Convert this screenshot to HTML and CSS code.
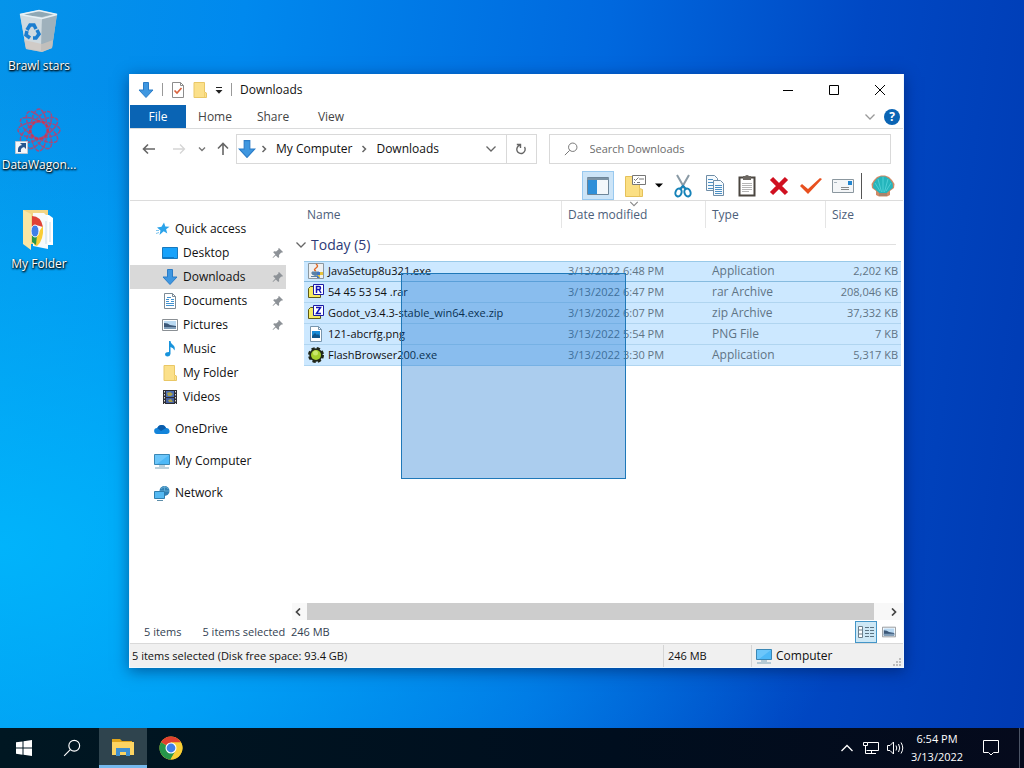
FILE: index.html
```html
<!DOCTYPE html>
<html lang="en">
<head>
  <meta charset="utf-8">
  <title>Downloads</title>
  <link rel="stylesheet" href="styles.css">
</head>
<body>
  <!-- shared icons -->
  <svg class="sprite" aria-hidden="true">
    <symbol id="i-down" viewBox="0 0 16 16"><path d="M5.500.5h5V8h4.500L8 15.500 1 8h4.500z" fill="#3f97e0" stroke="#2b7cc7"/></symbol>
    <symbol id="i-folder" viewBox="0 0 16 16"><path d="M2 .5h10.500V10l2 1v4.500H2z" fill="#fbe08a" stroke="#e9c766"/><path d="M12.500 10.500v4.500" stroke="#f2cf6c"/></symbol>
    <symbol id="i-picture" viewBox="0 0 16 16"><path d="M.5 2.500h15v11H.5z" fill="#fff" stroke="#8a8f94"/><path d="M2 4h12v8H2z" fill="#b9d9f2"/><path d="M2 6q4 0 6 2l6 1v3H2z" fill="#3c5878"/><path d="M2 10h12v2H2z" fill="#7f9db8"/></symbol>
    <symbol id="i-monitor" viewBox="0 0 16 16"><path d="M.5 1.500h15v10H.5z" fill="#4db8f7" stroke="#3a87b5"/><path d="M1 2h14L3 11H1z" fill="#6cc6fa"/><path d="M5 13h6M1 15h14" stroke="#7ba3b8"/></symbol>
    <symbol id="i-pin" viewBox="0 0 12 12"><path d="M7 1l4 4-1 .8-.8-.2L7 8l.2 2-.9.9-2.500-2.500L1 11l-.4-.4 2.800-3L1.200 5.200l.9-.9 2 .2L6.500 2.500 6.200 1.800z" fill="#8d9297"/></symbol>
    <symbol id="i-chev-right" viewBox="0 0 8 8"><path d="M2.500 1l3 3-3 3" fill="none" stroke="#666" stroke-width="1.500"/></symbol>
    <symbol id="i-chev-down" viewBox="0 0 12 12"><path d="M1.500 3.500L6 8l4.500-4.500" fill="none" stroke="currentColor" stroke-width="1.300"/></symbol>
    <symbol id="i-chrome" viewBox="0 0 24 24"><circle cx="12" cy="12" r="11.500" fill="#f7c928"/><path d="M12 12L2 6.200A11.500 11.500 0 0 1 22 6.500H12z" fill="#e0402f"/><path d="M2 6.200A11.500 11.500 0 0 0 11.500 23.500L16.500 15z" fill="#27964a"/><path d="M12 6.500h10A11.500 11.500 0 0 1 11.500 23.500L16.800 14.500z" fill="#f9cf36"/><circle cx="12" cy="12" r="5.500" fill="#fff"/><circle cx="12" cy="12" r="4.400" fill="#3f7fe8"/></symbol>
    <symbol id="i-magnifier" viewBox="0 0 16 16"><g fill="none" stroke="currentColor"><circle cx="10" cy="6" r="4.800"/><path d="M6.500 9.500L1 15"/></g></symbol>
  </svg>

  <main class="desktop">
    <div class="shortcuts">
      <a href="#" class="shortcut">
        <svg width="48" height="50" viewBox="0 0 48 50">
          <path d="M5 6l19-4 18 4-5 34-10 4-16-3z" fill="#b9c8d1"/>
          <path d="M5 7l22 3-1 33-15-3z" fill="#cfdae0"/>
          <path d="M27 10l15-4-5 34-11 3z" fill="#9fb1bc"/>
          <path d="M8 7l16-4 15 3-12 3z" fill="#8fa8b5"/>
          <path d="M5 6.500l19-4 18 4-15 4z" fill="none" stroke="#e6f0f5" stroke-width="1.500"/>
          <path d="M9 32l2 9 16 3 10-4 1-8-11 4z" fill="#d0c4bc" opacity=".7"/>
          <path d="M12 22l3-5h4l2 4M22 22l2 4-3 4h-3M15 30l-4-3 1-4" fill="none" stroke="#1c7ed0" stroke-width="3.500"/>
        </svg>
        <span>Brawl stars</span>
      </a>
      <a href="#" class="shortcut">
        <svg width="48" height="50" viewBox="0 0 48 50">
          <g fill="none" stroke="#a04c80" stroke-width="1.500" stroke-dasharray="4 1">
            <ellipse cx="24" cy="23" rx="21" ry="8"/>
            <ellipse cx="24" cy="23" rx="21" ry="8" transform="rotate(30 24 23)"/>
            <ellipse cx="24" cy="23" rx="21" ry="8" transform="rotate(60 24 23)"/>
            <ellipse cx="24" cy="23" rx="21" ry="8" transform="rotate(90 24 23)"/>
            <ellipse cx="24" cy="23" rx="21" ry="8" transform="rotate(120 24 23)"/>
            <ellipse cx="24" cy="23" rx="21" ry="8" transform="rotate(150 24 23)"/>
          </g>
          <circle cx="24" cy="23" r="9" fill="none" stroke="#c23a58" stroke-width="2" stroke-dasharray="3 2"/>
          <path d="M.500 34.500h12v12H.500z" fill="#f4f7fa" stroke="#b9c6d2"/>
          <path d="M3 45q-1-6 4-7l-2-2h6v6l-2-2q-4 1-3 5z" fill="#28568f"/>
        </svg>
        <span>DataWagon...</span>
      </a>
      <a href="#" class="shortcut">
        <svg width="48" height="50" viewBox="0 0 48 50">
          <path d="M8 4h25v34H8z" fill="#f3d584"/>
          <path d="M22 9h12l4 3v27H22z" fill="#fff"/>
          <path d="M18 7h11l4 4v32l-15-3z" fill="#f8fafb"/>
          <path d="M17 10q9 0 11 11l-7-2-4 5z" fill="#df4236"/>
          <path d="M28 20q1 14-6 20l-3-1 4-12z" fill="#f9cd36"/>
          <path d="M17 25l5 4-1 10-4-3z" fill="#27964a"/>
          <ellipse cx="20" cy="25" rx="4" ry="6" fill="#3f7fe8" stroke="#fff"/>
          <path d="M31 15v23M35 16v20" stroke="#c8dce8"/>
          <path d="M8 4l8 4v36l-8-6z" fill="#fbe6a4"/>
        </svg>
        <span>My Folder</span>
      </a>
    </div>

    <section class="window">
      <header class="titlebar">
        <svg width="16" height="16"><use href="#i-down"/></svg>
        <i class="bar"></i>
        <button type="button" aria-label="Properties"><svg width="14" height="16" viewBox="0 0 14 16"><path d="M1.500.5h8l3 3v12h-11z" fill="#fff" stroke="#8c8c8c"/><path d="M9.500.5v3h3" fill="none" stroke="#8c8c8c"/><path d="M3.500 8.500L6 11l4.500-5" fill="none" stroke="#d9633e" stroke-width="1.700"/></svg></button>
        <button type="button" aria-label="New folder"><svg width="14" height="16" viewBox="1 0 14 16"><use href="#i-folder" width="16" height="16"/></svg></button>
        <button type="button" aria-label="Customize"><svg width="8" height="8" viewBox="0 0 8 8"><path d="M1 1.500h6" stroke="#222"/><path d="M.5 4h7L4 7.800z" fill="#222"/></svg></button>
        <i class="bar"></i>
        <h1>Downloads</h1>
        <div class="controls">
          <button type="button" aria-label="Minimize"><svg width="12" height="12" viewBox="0 0 12 12"><path d="M1 6.500h10" stroke="#000"/></svg></button>
          <button type="button" aria-label="Maximize"><svg width="12" height="12" viewBox="0 0 12 12"><path d="M1.500 1.500h9v9h-9z" fill="none" stroke="#000"/></svg></button>
          <button type="button" aria-label="Close"><svg width="12" height="12" viewBox="0 0 12 12"><path d="M1 1l10 10M11 1L1 11" stroke="#000"/></svg></button>
        </div>
      </header>

      <div class="tabs">
        <button type="button" class="active">File</button>
        <button type="button">Home</button>
        <button type="button">Share</button>
        <button type="button">View</button>
        <div class="tabs-right">
          <button type="button" aria-label="Expand the ribbon"><svg width="12" height="12"><use href="#i-chev-down"/></svg></button>
          <button type="button" class="help">?</button>
        </div>
      </div>

      <div class="address-row">
        <button type="button" class="nav-btn" aria-label="Back"><svg width="14" height="14" viewBox="0 0 14 14"><path d="M13 7H1.500M6 2.500L1.500 7 6 11.500" fill="none" stroke="#666" stroke-width="1.600"/></svg></button>
        <button type="button" class="nav-btn" aria-label="Forward"><svg width="14" height="14" viewBox="0 0 14 14"><path d="M1 7h11.500M8 2.500L12.500 7 8 11.500" fill="none" stroke="#d5d5d5" stroke-width="1.300"/></svg></button>
        <button type="button" class="nav-btn small" aria-label="Recent"><svg width="8" height="8" viewBox="0 0 8 8"><path d="M1 2.500l3 3 3-3" fill="none" stroke="#777" stroke-width="1.400"/></svg></button>
        <button type="button" class="nav-btn up" aria-label="Up"><svg width="14" height="14" viewBox="0 0 14 14"><path d="M7 13V1.500M2 6.500l5-5 5 5" fill="none" stroke="#666" stroke-width="1.600"/></svg></button>
        <div class="address">
          <svg width="18" height="18"><use href="#i-down"/></svg>
          <svg width="8" height="8"><use href="#i-chev-right"/></svg>
          <a href="#">My Computer</a>
          <svg width="8" height="8"><use href="#i-chev-right"/></svg>
          <a href="#">Downloads</a>
          <button type="button" class="drop" aria-label="Previous locations"><svg width="12" height="12"><use href="#i-chev-down"/></svg></button>
          <button type="button" class="refresh" aria-label="Refresh"><svg width="12" height="12" viewBox="0 0 12 12"><path d="M9.500 4A4.200 4.200 0 1 1 5 2.200M1.800 1.500h3.700v3.600" fill="none" stroke="#666" stroke-width="1.400"/></svg></button>
        </div>
        <label class="search">
          <svg width="14" height="14"><use href="#i-magnifier"/></svg>
          <input type="text" placeholder="Search Downloads" aria-label="Search Downloads">
        </label>
      </div>

      <div class="toolbar">
        <button type="button" class="pressed" aria-label="Navigation pane"><svg width="24" height="18" viewBox="0 0 24 18"><path d="M1.500.5h21v17h-21z" fill="#f3f7fa" stroke="#6d8598"/><path d="M1 1h22v2H1z" fill="#7b92a4"/><path d="M2 3h9v14H2z" fill="#2f8fd8"/></svg></button>
        <button type="button" class="split" aria-label="Folder options"><svg width="24" height="24" viewBox="0 0 24 24"><path d="M1.500 2.500h14v12l3 1v7h-17z" fill="#fbdf83" stroke="#e5c15a"/><path d="M8.500 1.500h13v9h-13z" fill="#fff" stroke="#777"/><path d="M10 5l1.500 1.500 3-3M15 5h5M10 8.500h1M13 8.500h3" fill="none" stroke="#777"/><path d="M15.500 14v8" stroke="#e9c766"/></svg><svg width="8" height="5" viewBox="0 0 8 5"><path d="M0 .5h8L4 4.500z"/></svg></button>
        <button type="button" aria-label="Cut"><svg width="18" height="24" viewBox="0 0 18 24"><path d="M3 1l8 14M15 1L7 15" stroke="#8a9aa5" stroke-width="2"/><g fill="none" stroke="#1582b8" stroke-width="2"><ellipse cx="4.500" cy="18.500" rx="3" ry="4" transform="rotate(20 4.500 18.500)"/><ellipse cx="13.500" cy="18.500" rx="3" ry="4" transform="rotate(-20 13.500 18.500)"/><path d="M6 15l3-3 3 3"/></g></svg></button>
        <button type="button" aria-label="Copy"><svg width="20" height="22" viewBox="0 0 20 22"><g fill="#f6fafd" stroke="#6f8da6"><path d="M1.500.5h8l3 3v12h-11z"/><path d="M8.500 5.500h7l3 3v12h-10z"/></g><path d="M3 4.500h5M3 7.500h5M3 10.500h5M3 13.500h5M10 10.500h7M10 12.500h7M10 14.500h7M10 16.500h7M10 18.500h7" stroke="#4b8fc4"/></svg></button>
        <button type="button" aria-label="Paste"><svg width="18" height="22" viewBox="0 0 18 22"><path d="M1.500 2.500h15v18h-15z" fill="#fff" stroke="#4b4640" stroke-width="2"/><path d="M5 1h2q2-2 4 0h2v4H5z" fill="#6c6862"/><path d="M4 8.500h10M4 10.500h10M4 12.500h10M4 14.500h10M4 16.500h7" stroke="#b5b5b5"/></svg></button>
        <button type="button" aria-label="Delete"><svg width="20" height="20" viewBox="0 0 20 20"><path d="M2.500 2.500l15 15M17.500 2.500l-15 15" stroke="#d01020" stroke-width="4.500"/></svg></button>
        <button type="button" aria-label="Rename"><svg width="24" height="20" viewBox="0 0 24 20"><path d="M1 10l2-2 6 5L21 2l2 1L9 18z" fill="#e8501f"/></svg></button>
        <button type="button" aria-label="Properties"><svg width="22" height="14" viewBox="0 0 22 14"><path d="M.5.5h21v13H.5z" fill="#f4f6f8" stroke="#8b979f"/><path d="M9 8.500h8M9 10.500h8" stroke="#888"/><path d="M16 2h4v4h-4z" fill="#2386cf"/><path d="M2 3.500h3" stroke="#a8b4bd"/></svg></button>
        <i class="divider"></i>
        <button type="button" aria-label="Shell"><svg width="24" height="22" viewBox="0 0 24 22"><path d="M5 16L1 13 .5 9 3 5l3-3 4-1.500h4L18 2l3 3 2.500 4-.5 4-4 3v4l-3 1.500H8L5 20z" fill="#cf8a66"/><path d="M6 16L2 12.500 2.500 8l3-4 4-2.500h5l4 2.500 3 4 .5 4.500L18 16l-3 2.500H9z" fill="#25b5bc"/><path d="M12 17V2M10.500 17L7 4M13.500 17L17 4M9 16L4 8M15 16l5-8" stroke="#4fcfd5" fill="none"/><path d="M8 18h8v3H8z" fill="#a9836c"/></svg></button>
      </div>

      <div class="content">
        <nav class="tree">
          <a href="#"><svg width="14" height="14" viewBox="0 0 14 14"><path d="M8 .500l1.300 4 4.200.2-3.400 2.600 1.200 4.200-3.600-2.300L3.500 13l1-4.600L1 5.500l4.500-.8z" fill="#2ba3ea"/><path d="M0 8.500h3M0 11.500l3-1" stroke="#7cc4ee"/></svg>Quick access</a>
          <a href="#" class="sub"><svg width="16" height="16" viewBox="0 0 16 16"><path d="M.5 2.500h15v11H.5z" fill="#17a2fb" stroke="#1879bd"/><path d="M1 12.500h11" stroke="#0b78c8"/></svg>Desktop<svg class="pin" width="12" height="12"><use href="#i-pin"/></svg></a>
          <a href="#" class="sub current"><svg width="16" height="16"><use href="#i-down"/></svg>Downloads<svg class="pin" width="12" height="12"><use href="#i-pin"/></svg></a>
          <a href="#" class="sub"><svg width="16" height="16" viewBox="0 0 16 16"><path d="M2.500.5h8l3 3v12h-11z" fill="#fff" stroke="#7d8b96"/><path d="M10.500.5v3h3" fill="none" stroke="#7d8b96"/><path d="M4 6.500h3M4 8.500h3M9 6.500h3M9 8.500h3M4 10.500h8M4 12.500h8M5 4.500h4" stroke="#4192d0"/></svg>Documents<svg class="pin" width="12" height="12"><use href="#i-pin"/></svg></a>
          <a href="#" class="sub"><svg width="16" height="16"><use href="#i-picture"/></svg>Pictures<svg class="pin" width="12" height="12"><use href="#i-pin"/></svg></a>
          <a href="#" class="sub"><svg width="16" height="16" viewBox="0 0 16 16"><path d="M7 0h1.500q0 2.500 2.500 4t1.500 5.500q-1-3-4-3.500v7q-.5 2.500-3 2.500T3 13.300Q3.300 11 7 11z" fill="#1793dc"/></svg>Music</a>
          <a href="#" class="sub"><svg width="16" height="16"><use href="#i-folder"/></svg>My Folder</a>
          <a href="#" class="sub"><svg width="16" height="16" viewBox="0 0 16 16"><path d="M1 1h14v14H1z" fill="#2d2d33"/><path d="M4 2h8v6H4z" fill="#4c6fb5"/><path d="M4 9h8v5H4z" fill="#4560a0"/><path d="M5 4l3-1 3 2-2 2H6zM6 11l3-1 2 3H7z" fill="#a9a14b"/><path d="M2.500 2v13M13.500 2v13" stroke="#ddd" stroke-dasharray="1.500 1.500"/></svg>Videos</a>
          <a href="#" class="root"><svg width="16" height="16" viewBox="0 0 16 16"><path d="M3 13a3 3 0 0 1 .3-6A4.700 4.700 0 0 1 12 7a3 3 0 0 1 1 6z" fill="#1384da"/><path d="M3.300 7A4.700 4.700 0 0 1 12 7L7 10z" fill="#0b5cab"/></svg>OneDrive</a>
          <a href="#" class="root"><svg width="16" height="16"><use href="#i-monitor"/></svg>My Computer</a>
          <a href="#" class="root"><svg width="16" height="16" viewBox="0 0 16 16"><circle cx="10.500" cy="6" r="5" fill="#2f80b5"/><path d="M7 4q4-4 7 0M10.500 1v9M6 6h9" stroke="#5fa8d0" fill="none"/><path d="M.5 6.500h10v7H.5z" fill="#55b9f2" stroke="#2f7eae"/><path d="M3 15.500h6" stroke="#5d8eaa"/></svg>Network</a>
        </nav>

        <div class="files">
          <table>
            <colgroup><col class="col-name"><col class="col-date"><col class="col-type"><col></colgroup>
            <thead>
              <tr>
                <th>Name</th>
                <th class="sorted"><svg width="10" height="10"><use href="#i-chev-down"/></svg>Date modified</th>
                <th>Type</th>
                <th>Size</th>
              </tr>
            </thead>
            <tbody>
              <tr class="group">
                <td colspan="4"><div><svg width="12" height="12"><use href="#i-chev-down"/></svg>Today (5)<hr></div></td>
              </tr>
              <tr class="selected focused">
                <td><div><svg width="16" height="16" viewBox="0 0 16 16"><path d="M.5.5h15v15H.5z" fill="#edf0f2" stroke="#8b979f"/><path d="M8 1q3 2 0 4t0 3" stroke="#e06a27" stroke-width="1.500" fill="none"/><path d="M4 9h7v2q-3.500 3-7 0zM3 13.500h8" fill="#5a82a6" stroke="#5a82a6"/><path d="M9 9h3v6H9z" fill="#3f74c4"/><path d="M12 9h3v3h-3zM9 12h3v3" fill="#e8c43a"/></svg>JavaSetup8u321.exe</div></td>
                <td>3/13/2022 6:48 PM</td><td class="type">Application</td><td>2,202 KB</td>
              </tr>
              <tr class="selected">
                <td><div><svg width="16" height="16" viewBox="0 0 16 16"><path d="M.5 4.500l2-2h4v2h6v9h-12z" fill="#f5ec62" stroke="#5d5916"/><path d="M5.500.5h10v10h-10z" fill="#fff" stroke="#1b1ba5"/><path d="M8.500 9V2.500h2.500q1.500 0 1.500 1.500T11 5.500H8.500M11 5.500L13 9" fill="none" stroke="#1414b4" stroke-width="1.500"/></svg>54 45 53 54 .rar</div></td>
                <td>3/13/2022 6:47 PM</td><td class="type">rar Archive</td><td>208,046 KB</td>
              </tr>
              <tr class="selected">
                <td><div><svg width="16" height="16" viewBox="0 0 16 16"><path d="M.5 4.500l2-2h4v2h6v9h-12z" fill="#f5ec62" stroke="#5d5916"/><path d="M5.500.5h10v10h-10z" fill="#fff" stroke="#1b1ba5"/><path d="M8 2.500h4.500L8.500 8.500H13" fill="none" stroke="#1414b4" stroke-width="1.500"/></svg>Godot_v3.4.3-stable_win64.exe.zip</div></td>
                <td>3/13/2022 6:07 PM</td><td class="type">zip Archive</td><td>37,332 KB</td>
              </tr>
              <tr class="selected">
                <td><div><svg width="16" height="16" viewBox="0 0 16 16"><path d="M2.500.5h8l3 3v12h-11z" fill="#fff" stroke="#7896ae"/><path d="M10.500.5v3h3" fill="none" stroke="#7896ae"/><path d="M4 5h8v7H4z" fill="#178ad6"/><path d="M4 10l3-3 2 2 1-1 2 2v2H4z" fill="#0c558c"/></svg>121-abcrfg.png</div></td>
                <td>3/13/2022 5:54 PM</td><td class="type">PNG File</td><td>7 KB</td>
              </tr>
              <tr class="selected">
                <td><div><svg width="16" height="16" viewBox="0 0 16 16"><circle cx="8" cy="8" r="6.500" fill="#2c3522" stroke="#20261a" stroke-width="3" stroke-dasharray="3.100 2"/><circle cx="8" cy="8" r="6.500" fill="#20261a"/><circle cx="8" cy="8" r="5" fill="#a5cf2e"/><circle cx="7.500" cy="6" r="2.500" fill="#cbe76c"/></svg>FlashBrowser200.exe</div></td>
                <td>3/13/2022 3:30 PM</td><td class="type">Application</td><td>5,317 KB</td>
              </tr>
            </tbody>
          </table>
          <div class="marquee"></div>
          <div class="scrollbar">
            <button type="button" aria-label="Scroll left"><svg width="8" height="8" viewBox="0 0 8 8"><path d="M6 .5L2.500 4 6 7.500" fill="none" stroke="#444" stroke-width="1.700"/></svg></button>
            <div class="thumb"></div>
            <button type="button" class="right" aria-label="Scroll right"><svg width="8" height="8" viewBox="0 0 8 8"><path d="M2 .5L5.500 4 2 7.500" fill="none" stroke="#444" stroke-width="1.700"/></svg></button>
          </div>
        </div>
      </div>

      <div class="details">
        <span>5 items</span>
        <span>5 items selected&nbsp; 246 MB</span>
        <div class="views">
          <button type="button" class="on" aria-label="Details view"><svg width="18" height="14" viewBox="0 0 18 14"><path d="M1.500 1.500h4v11h-4zM1.500 5h4M1.500 9h4" fill="#fff" stroke="#6b7f8c"/><path d="M8 2.500h4M13 2.500h4M8 5.500h4M13 5.500h4M8 8.500h4M13 8.500h4M8 11.500h4M13 11.500h4" stroke="#5c7382"/></svg></button>
          <button type="button" aria-label="Large icons"><svg width="14" height="14"><use href="#i-picture"/></svg></button>
        </div>
      </div>

      <footer class="statusbar">
        <span class="free">5 items selected (Disk free space: 93.4 GB)</span>
        <span class="size">246 MB</span>
        <span class="zone"><svg width="16" height="16"><use href="#i-monitor"/></svg>Computer</span>
        <svg class="grip" width="10" height="10" viewBox="0 0 10 10"><path d="M7 1h2v2H7zM4 4h2v2H4zM7 4h2v2H7zM1 7h2v2H1zM4 7h2v2H4zM7 7h2v2H7z" fill="#bdbdbd"/></svg>
      </footer>
    </section>
  </main>

  <footer class="taskbar">
    <button type="button" aria-label="Start"><svg width="16" height="16" viewBox="0 0 16 16"><path d="M0 2.300L6.500 1.400v6.200H0zM7.500 1.200L16 0v7.600H7.500zM0 8.500h6.500v6.200L0 13.800zM7.500 8.500H16V16l-8.500-1.200z" fill="#fff"/></svg></button>
    <button type="button" class="find" aria-label="Search"><svg width="18" height="18"><use href="#i-magnifier"/></svg></button>
    <button type="button" class="running" aria-label="File Explorer"><svg width="24" height="20" viewBox="0 0 24 20"><path d="M1 2h8l2 2h10v4H1z" fill="#e0a51b"/><path d="M1 5h22v13H1z" fill="#fcd462"/><path d="M5 11h14v8h-4v-4H9v4H5z" fill="#3f8fd0"/></svg></button>
    <button type="button" aria-label="Chrome"><svg width="24" height="24"><use href="#i-chrome"/></svg></button>
    <div class="tray">
      <button type="button" aria-label="Hidden icons"><svg width="14" height="10" viewBox="0 0 14 10"><path d="M1.500 8L7 2.500 12.500 8" fill="none" stroke="#fff" stroke-width="1.300"/></svg></button>
      <button type="button" aria-label="Network"><svg width="18" height="16" viewBox="0 0 18 16"><path d="M5.500 2.500h11v8h-12M9.500 10.500v3M6 13.500h8M1.500 2.500h4v3h-4zM3.500 5.500v8h3" fill="none" stroke="#fff"/></svg></button>
      <button type="button" aria-label="Volume"><svg width="18" height="16" viewBox="0 0 18 16"><path d="M1.500 5.500H4L7.500 2v12L4 10.500H1.500zM10 5.500q1.500 2.500 0 5M12.500 4q2.500 4 0 8M15 2.500q3.500 5.500 0 11" fill="none" stroke="#fff"/></svg></button>
      <div class="clock"><span>6:54 PM</span><span>3/13/2022</span></div>
      <button type="button" class="action" aria-label="Notifications"><svg width="18" height="18" viewBox="0 0 18 18"><path d="M1.500 1.500h15v12h-5L9 16l-2.500-2.500h-5z" fill="none" stroke="#fff"/></svg></button>
    </div>
  </footer>
</body>
</html>
```

FILE: styles.css
```css
* {
  box-sizing: border-box;
}

body {
  margin: 0;
  height: 100vh;
  display: flex;
  flex-direction: column;
  overflow: hidden;
  font-family: "Open Sans", "Noto Sans", sans-serif;
  font-size: 12px;
  line-height: 16px;
  color: #111;
}

a {
  color: inherit;
  text-decoration: none;
}

button {
  display: flex;
  align-items: center;
  justify-content: center;
  padding: 0;
  border: none;
  background: none;
  font: inherit;
  color: inherit;
}

svg {
  display: block;
  flex: none;
}

.sprite {
  position: absolute;
  width: 0;
  height: 0;
}

/* desktop */
.desktop {
  flex: 1;
  position: relative;
  background:
    radial-gradient(ellipse at 0% 75%, rgba(0, 188, 255, 0.8), rgba(0, 170, 255, 0) 60%),
    linear-gradient(97deg, #0594ea 0%, #0089ee 22%, #0068de 55%, #0048c4 78%, #003ab2 100%);
}

.shortcuts {
  width: 78px;
  padding-top: 8px;
}

.shortcut {
  display: flex;
  flex-direction: column;
  align-items: center;
  height: 99px;
  color: #fff;
  white-space: nowrap;
  text-shadow: 1px 1px 2px #000, 0 1px 2px #000;
}

/* explorer window */
.window {
  position: absolute;
  top: 74px;
  right: 120px;
  bottom: 60px;
  left: 129px;
  display: flex;
  flex-direction: column;
  background: #fff;
  border: 1px solid #eef8ff;
  border-top: none;
  box-shadow: 0 3px 14px rgba(0, 20, 70, 0.5);
}

.titlebar {
  display: flex;
  align-items: center;
  height: 31px;
  padding-left: 8px;
  gap: 8px;
}

.titlebar h1 {
  margin: 0;
  font-size: 12px;
  font-weight: normal;
}

.bar {
  width: 1px;
  height: 13px;
  background: #999;
}

.controls {
  display: flex;
  align-self: stretch;
  margin-left: auto;
}

.controls button {
  width: 46px;
}

.tabs {
  display: flex;
  height: 24px;
  border-bottom: 1px solid #dadbdc;
  color: #444;
}

.tabs > button {
  width: 58px;
}

.tabs > .active {
  width: 56px;
  background: #0a64b4;
  color: #fff;
}

.tabs-right {
  display: flex;
  align-items: center;
  gap: 8px;
  margin-left: auto;
  padding-right: 3px;
  color: #999;
}

.help {
  width: 16px;
  height: 16px;
  border-radius: 50%;
  background: #0a64b4;
  color: #fff;
  font-weight: bold;
}

.address-row {
  display: flex;
  align-items: center;
  height: 42px;
  padding: 0 12px 2px 4px;
  color: #666;
}

.nav-btn {
  width: 30px;
}

.nav-btn.small {
  width: 16px;
}

.nav-btn.up {
  width: 26px;
}

.address,
.search {
  display: flex;
  align-items: center;
  height: 30px;
  border: 1px solid #d9d9d9;
}

.address {
  flex: 1 1 300px;
  padding-left: 1px;
  gap: 4px;
}

.address a {
  margin: 0 4px;
  color: #111;
}

.address .drop {
  width: 30px;
  margin-left: auto;
}

.address .refresh {
  align-self: stretch;
  width: 30px;
  margin-left: -4px;
  border-left: 1px solid #d9d9d9;
}

.search {
  flex: 1 1 342px;
  margin-left: 12px;
  padding-left: 14px;
  gap: 12px;
}

.search input {
  flex: 1;
  min-width: 0;
  padding: 0;
  border: none;
  outline: none;
  font: inherit;
  font-size: 11px;
}

.search input::placeholder {
  color: #6d6d6d;
}

.toolbar {
  display: flex;
  align-items: center;
  justify-content: flex-end;
  height: 30px;
  padding-right: 4px;
  border-bottom: 1px solid #dcdcdc;
}

.toolbar button {
  width: 32px;
  height: 29px;
}

.toolbar .pressed {
  background: #cce4f7;
  border: 1px solid #99c9ef;
}

.toolbar .split {
  width: 53px;
  padding-left: 6px;
  gap: 7px;
}

.divider {
  width: 1px;
  height: 26px;
  margin: 0 5px 0 2px;
  background: #555;
}

.content {
  flex: 1;
  display: flex;
  min-height: 0;
}

/* navigation tree */
.tree {
  width: 162px;
  padding: 16px 6px 0 0;
}

.tree a {
  display: flex;
  align-items: center;
  gap: 5px;
  height: 24px;
  padding-left: 26px;
}

.tree .sub {
  padding-left: 32px;
}

.tree .root {
  margin-top: 8px;
  padding-left: 24px;
}

.tree .current {
  background: #d9d9d9;
}

.tree .pin {
  margin: 0 2px 0 auto;
}

/* file list */
.files {
  flex: 1;
  position: relative;
  display: flex;
  flex-direction: column;
  padding-left: 12px;
}

table {
  width: calc(100% - 2px);
  table-layout: fixed;
  border-spacing: 0;
}

.col-name {
  width: 257px;
}

.col-date {
  width: 144px;
}

.col-type {
  width: 120px;
}

th {
  height: 27px;
  padding: 0 6px;
  border-left: 1px solid #e5e5e5;
  font-weight: normal;
  text-align: left;
  color: #4c607a;
}

th:first-child {
  padding-left: 3px;
  border-left: none;
}

.sorted {
  position: relative;
}

.sorted svg {
  position: absolute;
  top: -2px;
  left: 50%;
  margin-left: -5px;
  color: #888;
}

.group td {
  height: 33px;
  padding: 0;
}

.group div {
  display: flex;
  align-items: center;
  gap: 4px;
  margin-left: -9px;
  font-size: 14px;
  color: #2d3a77;
}

.group svg {
  color: #666;
}

.group hr {
  flex: 1;
  margin: 0 5px 0 4px;
  border: none;
  border-top: 1px solid #e0e0e0;
}

.selected td {
  height: 21px;
  padding: 0 7px;
  background: #cce8ff;
  border-bottom: 1px solid #b0d5f0;
  color: #5f7485;
  font-size: 11px;
  white-space: nowrap;
}

.selected td:first-child {
  padding: 0 0 0 4px;
  color: #111;
}

.selected td:last-child {
  padding-right: 3px;
  text-align: right;
}

.selected .type {
  font-size: 12px;
}

.selected div {
  display: flex;
  align-items: center;
  gap: 4px;
}

.focused td {
  box-shadow: inset 0 1px #99c9e8;
  border-bottom-color: #86bbdf;
}

.marquee {
  position: absolute;
  top: 72px;
  left: 109px;
  width: 225px;
  height: 206px;
  background: rgba(0, 102, 204, 0.33);
  border: 1px solid #1f78b8;
}

.scrollbar {
  display: flex;
  height: 17px;
  margin: auto 0 0 -12px;
  background: #f8f8f8;
}

.scrollbar button {
  width: 12px;
}

.scrollbar .right {
  width: 18px;
}

.scrollbar .thumb {
  flex: 1;
  margin: 0 11px 0 3px;
  background: #cdcdcd;
}

/* bottom bars */
.details {
  display: flex;
  align-items: center;
  gap: 21px;
  height: 23px;
  padding: 0 4px 0 14px;
  font-size: 11px;
  color: #333f52;
}

.views {
  display: flex;
  gap: 2px;
  margin-left: auto;
}

.views button {
  width: 20px;
  height: 22px;
}

.views .on {
  width: 22px;
  background: #cde8f6;
  border: 1px solid #4496c8;
}

.statusbar {
  display: flex;
  align-items: center;
  height: 24px;
  border-top: 1px solid #d9d9d9;
  background: #f0f0f0;
}

.statusbar .free {
  flex: 1;
  padding-left: 2px;
  font-size: 11px;
}

.size,
.zone {
  display: flex;
  align-items: center;
  gap: 4px;
  height: 22px;
  padding-left: 4px;
  border-left: 1px solid #d5d5d5;
}

.size {
  width: 88px;
  font-size: 11px;
}

.zone {
  width: 141px;
}

.grip {
  align-self: flex-end;
  margin-right: 1px;
}

/* taskbar */
.taskbar {
  display: flex;
  height: 40px;
  background: linear-gradient(to right, #001722, #000e1e 60%, #050a1c);
  color: #fff;
}

.taskbar > button {
  width: 48px;
}

.taskbar .find {
  margin-right: 3px;
}

.taskbar .running {
  background: #2f444e;
  border-bottom: 3px solid #76b9ed;
}

.tray {
  display: flex;
  margin: 0 4px 0 auto;
  border-right: 1px solid #4c5566;
}

.tray button {
  width: 24px;
}

.clock {
  display: flex;
  flex-direction: column;
  justify-content: center;
  width: 56px;
  padding-left: 4px;
  font-size: 11px;
  line-height: 18px;
  text-align: center;
}

.tray .action {
  width: 56px;
}
```
